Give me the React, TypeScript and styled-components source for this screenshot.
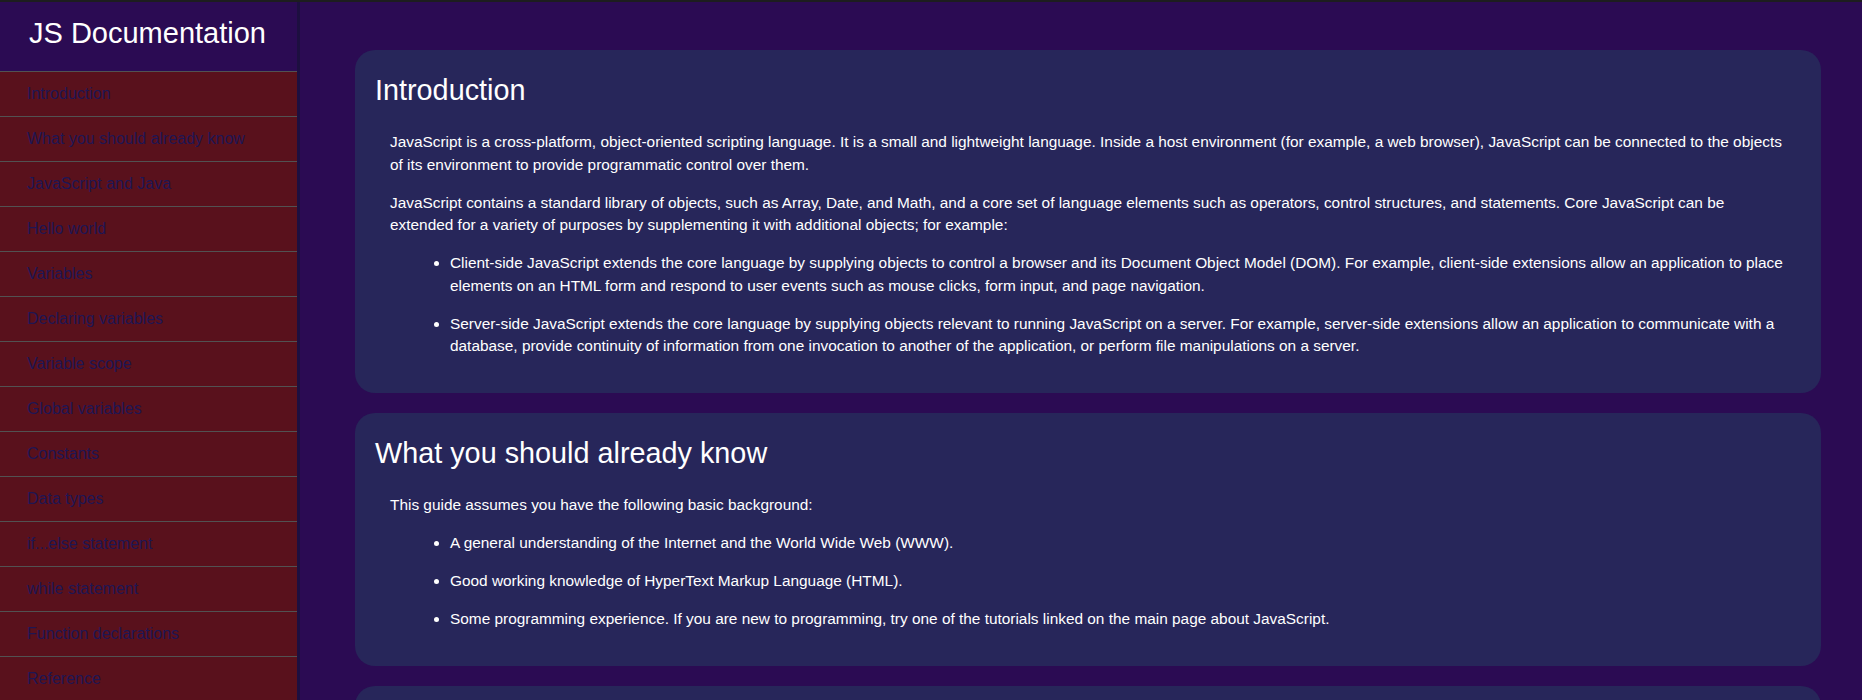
import React from "react";
import styled, { createGlobalStyle } from "styled-components";

const Global = createGlobalStyle`
  html, body {
    margin: 0;
    padding: 0;
    height: 100%;
    overflow: hidden;
    background: #2b0b53;
    font-family: "Liberation Sans", Arial, sans-serif;
  }
  * { box-sizing: border-box; }
`;

const Page = styled.div`
  height: 100vh;
  display: flex;
  flex-direction: column;
  border-top: 2px solid #1d1d1f;
  overflow: hidden;
`;

const Layout = styled.div`
  flex: 1;
  display: flex;
  min-height: 0;
`;

const Sidebar = styled.nav`
  width: 300px;
  flex-shrink: 0;
  background: #59111c;
  border-right: 3px solid #1d0f40;
  overflow: hidden;
`;

const SideHeader = styled.header`
  height: 69px;
  background: #2b0b53;
  color: #ffffff;
  font-size: 29px;
  padding: 15px 0 0 29px;
  margin: 0;
  font-weight: normal;
`;

const NavList = styled.ul`
  list-style: none;
  margin: 0;
  padding: 0;
`;

const NavLink = styled.a`
  display: flex;
  align-items: center;
  height: 45px;
  border-top: 1px solid #525252;
  padding-left: 27px;
  font-size: 16px;
  color: #1e1654;
  text-decoration: none;
`;

const Main = styled.main`
  flex: 1;
  min-width: 0;
  padding: 48px 41px 0 55px;
  overflow: hidden;
  display: flex;
  flex-direction: column;
  gap: 20px;
`;

const Card = styled.section<{ $stub?: boolean }>`
  background: #27265a;
  border-radius: 20px;
  padding: 0 20px 20px;
  display: flow-root;
  color: #ffffff;
  flex-shrink: 0;
  min-height: ${(p) => (p.$stub ? "120px" : "0")};
`;

const Title = styled.h2`
  font-size: 28.8px;
  font-weight: normal;
  margin: 24px 0;
  line-height: normal;
`;

const Para = styled.p`
  font-size: 15.4px;
  line-height: 22.5px;
  margin: 15.5px 0;
  padding: 0 15px;
`;

const List = styled.ul`
  margin: 15.5px 0;
  padding-left: 75px;
`;

const Item = styled.li`
  font-size: 15.4px;
  line-height: 22.5px;
  margin: 15.5px 0;
`;

const navItems = [
  "Introduction",
  "What you should already know",
  "JavaScript and Java",
  "Hello world",
  "Variables",
  "Declaring variables",
  "Variable scope",
  "Global variables",
  "Constants",
  "Data types",
  "if...else statement",
  "while statement",
  "Function declarations",
  "Reference",
];

export default function App() {
  return (
    <>
      <Global />
      <Page>
        <Layout>
          <Sidebar>
            <SideHeader>JS Documentation</SideHeader>
            <NavList>
              {navItems.map((n) => (
                <li key={n}>
                  <NavLink href="#">{n}</NavLink>
                </li>
              ))}
            </NavList>
          </Sidebar>
          <Main>
            <Card>
              <Title>Introduction</Title>
              <Para>
                JavaScript is a cross-platform, object-oriented scripting language. It is a small and
                lightweight language. Inside a host environment (for example, a web browser), JavaScript
                can be connected to the objects of its environment to provide programmatic control over
                them.
              </Para>
              <Para>
                JavaScript contains a standard library of objects, such as Array, Date, and Math, and a
                core set of language elements such as operators, control structures, and statements. Core
                JavaScript can be extended for a variety of purposes by supplementing it with additional
                objects; for example:
              </Para>
              <List>
                <Item>
                  Client-side JavaScript extends the core language by supplying objects to control a
                  browser and its Document Object Model (DOM). For example, client-side extensions allow an
                  application to place elements on an HTML form and respond to user events such as mouse
                  clicks, form input, and page navigation.
                </Item>
                <Item>
                  Server-side JavaScript extends the core language by supplying objects relevant to running
                  JavaScript on a server. For example, server-side extensions allow an application to
                  communicate with a database, provide continuity of information from one invocation to
                  another of the application, or perform file manipulations on a server.
                </Item>
              </List>
            </Card>
            <Card>
              <Title>What you should already know</Title>
              <Para>This guide assumes you have the following basic background:</Para>
              <List>
                <Item>A general understanding of the Internet and the World Wide Web (WWW).</Item>
                <Item>Good working knowledge of HyperText Markup Language (HTML).</Item>
                <Item>
                  Some programming experience. If you are new to programming, try one of the tutorials
                  linked on the main page about JavaScript.
                </Item>
              </List>
            </Card>
            <Card $stub />
          </Main>
        </Layout>
      </Page>
    </>
  );
}
